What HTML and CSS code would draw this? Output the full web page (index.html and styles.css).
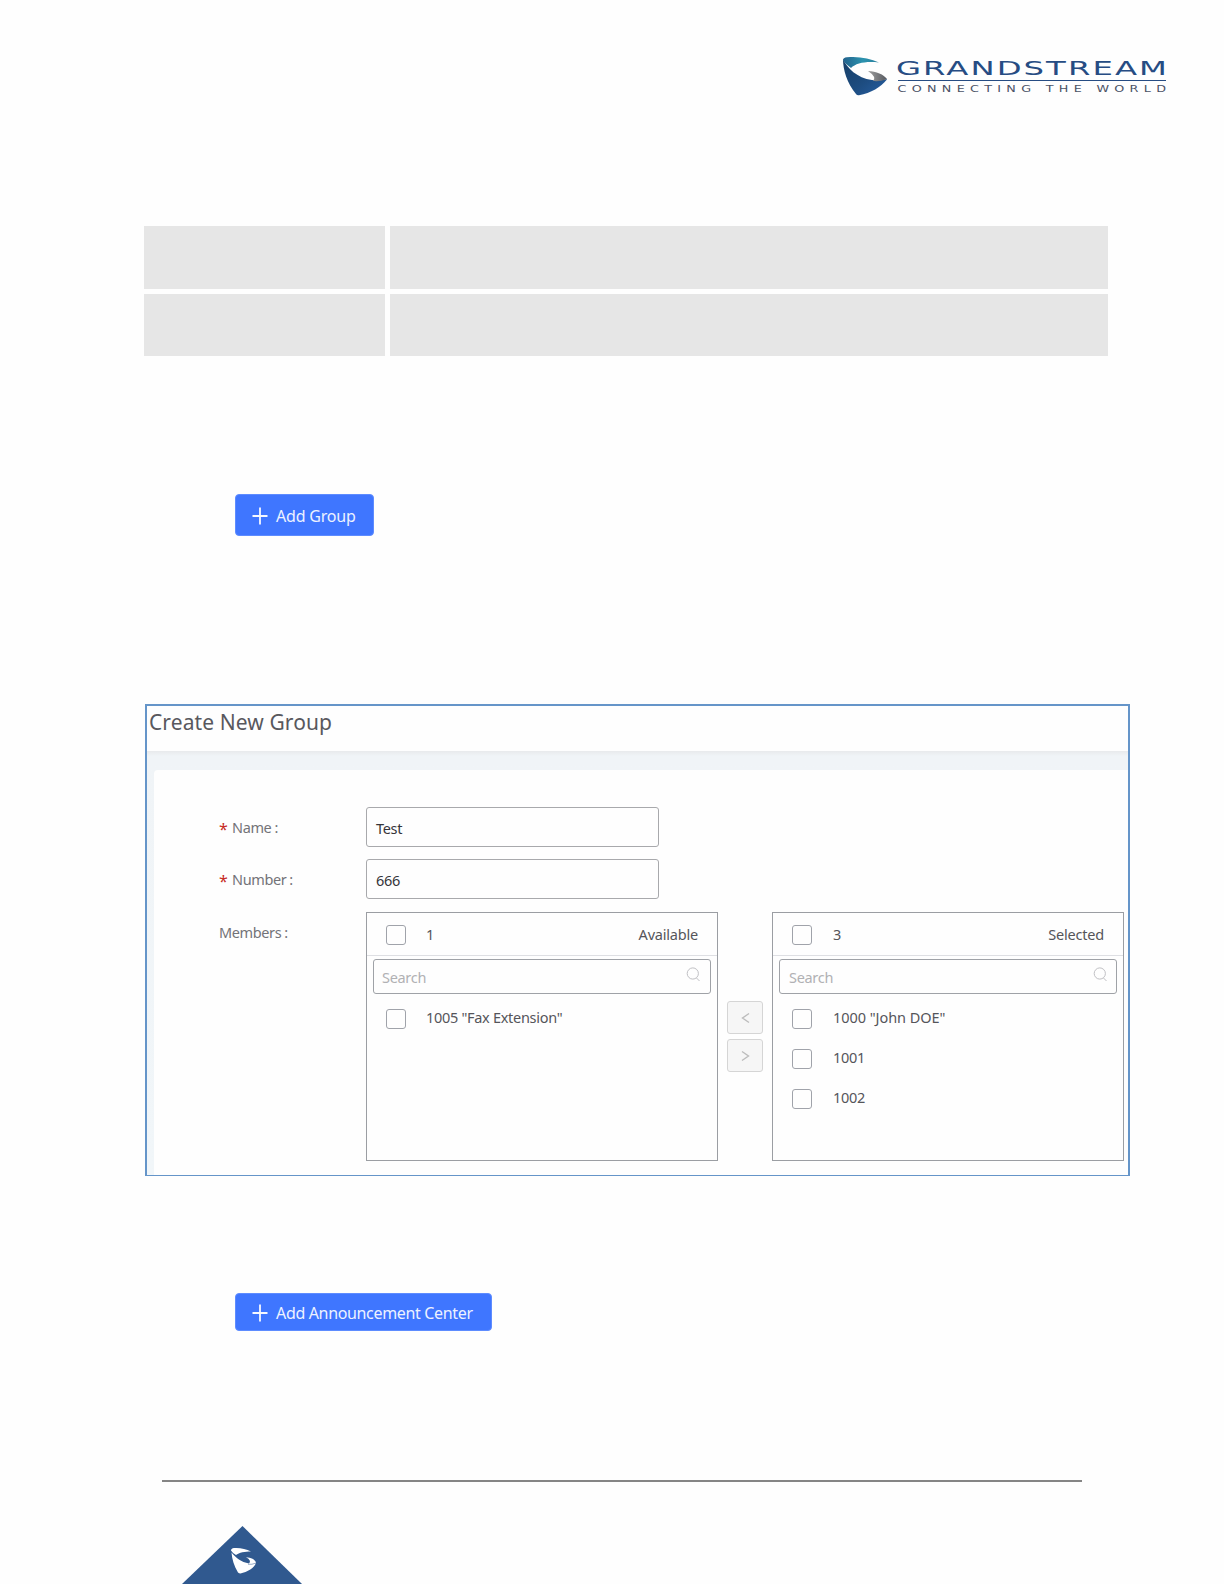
FILE: index.html
```html
<!DOCTYPE html>
<html lang="en">
<head>
<meta charset="utf-8">
<title>Create New Group</title>
<link rel="stylesheet" href="styles.css">
</head>
<body>
<main class="page">
  <header class="brand">
    <svg width="326" height="42" viewBox="842 55 326 42" role="img" aria-label="Grandstream">
      <defs>
        <linearGradient id="teal" x1="0" x2="1"><stop offset="0" stop-color="#23628c"/><stop offset=".55" stop-color="#2b92ae"/><stop offset="1" stop-color="#2a7f9d"/></linearGradient>
        <linearGradient id="navy" x1="0" x2="1" y1="0" y2="1"><stop offset="0" stop-color="#173e66"/><stop offset=".55" stop-color="#1d4c80"/><stop offset="1" stop-color="#285fa2"/></linearGradient>
        <linearGradient id="steel" x1="0" x2="1"><stop offset="0" stop-color="#a0a0a0"/><stop offset="1" stop-color="#55585e"/></linearGradient>
      </defs>
      <path fill="url(#navy)" d="M843 59C847 68 857 78 872 80C878 81 883 80 887 79L886.500 80C881 87 871 93 859 95.200Q857 95.500 856 94C847 83 843 70 843 59Z"/>
      <path fill="url(#teal)" d="M843 60Q843 57.600 847 57.200C859 56 870 58.500 879 62.500C866 61 856 63 851 68C847 65 844 62 843 60Z"/>
      <path fill="url(#steel)" d="M868 71C876 71.500 884 74.500 887 79C884 80.500 879 81.500 873 81Q877 77 868 71Z"/>
      <path fill="#264c83" d="M898 80h268v1.100H898z"/>
      <text class="brand-name" transform="translate(896 75) scale(1.65 1)" textLength="164.200" lengthAdjust="spacing">GRANDSTREAM</text>
      <text class="brand-tag" transform="translate(897.500 92) scale(1.5 1)" textLength="179" lengthAdjust="spacing">CONNECTING THE WORLD</text>
    </svg>
  </header>

  <div class="grid-table"><div></div><div></div><div></div><div></div></div>

  <button class="add add-group"><svg width="16" height="18" viewBox="0 0 16 18"><path d="M.5 9h15M8 .5v17"/></svg><span>Add Group</span></button>

  <section class="frame">
    <h1>Create New Group</h1>
    <div class="backdrop">
      <form class="panel">
        <div class="row"><label><i>*</i>Name<b>:</b></label><div class="field">Test</div></div>
        <div class="row"><label><i>*</i>Number<b>:</b></label><div class="field">666</div></div>
        <div class="row members">
          <label>Members<b>:</b></label>
          <div class="list">
            <div class="head"><span class="box"></span><span>1</span><span class="kind">Available</span></div>
            <div class="search">Search<svg width="15" height="16" viewBox="0 0 15 16"><circle cx="6.800" cy="6.500" r="5.600"/><path d="M10.500 11l3 3"/></svg></div>
            <div class="item"><span class="box"></span><span>1005 "Fax Extension"</span></div>
          </div>
          <div class="moves">
            <div class="move"><svg width="9" height="12" viewBox="0 0 9 12"><path d="M8 1.500L1.500 6L8 10.500"/></svg></div>
            <div class="move"><svg width="9" height="12" viewBox="0 0 9 12"><path d="M1 1.500L7.500 6L1 10.500"/></svg></div>
          </div>
          <div class="list selected">
            <div class="head"><span class="box"></span><span>3</span><span class="kind">Selected</span></div>
            <div class="search">Search<svg width="15" height="16" viewBox="0 0 15 16"><circle cx="6.800" cy="6.500" r="5.600"/><path d="M10.500 11l3 3"/></svg></div>
            <div class="item"><span class="box"></span><span>1000 "John DOE"</span></div>
            <div class="item"><span class="box"></span><span>1001</span></div>
            <div class="item"><span class="box"></span><span>1002</span></div>
          </div>
        </div>
      </form>
    </div>
  </section>

  <button class="add add-center"><svg width="16" height="18" viewBox="0 0 16 18"><path d="M.5 9h15M8 .5v17"/></svg><span>Add Announcement Center</span></button>

  <footer>
    <hr>
    <svg class="corner" width="120" height="58" viewBox="182 1526 120 58">
      <path fill="#30598f" d="M242.500 1526L302 1584H182z"/>
      <path fill="#fff" d="M231 1550.500Q231 1548.500 234 1548C240 1547.500 246 1549 251 1551.500C245 1551.500 239 1552.500 236 1555Q232 1552.500 231 1550.500Z"/>
      <path fill="#fff" d="M231.500 1552.500C236 1558 241 1562 249 1563.500Q252 1560.500 246 1557.300C251 1557.500 255 1559.500 256 1562.500C255 1568 247 1572 240.500 1573.500Q239 1573.500 238 1572.500C234 1566 232 1559 231.500 1552.500Z"/>
      <path fill="none" stroke="#30598f" stroke-width=".5" d="M248 1564.300Q252 1564.800 256 1563"/>
    </svg>
  </footer>
</main>
</body>
</html>
```
FILE: styles.css
```css
* { box-sizing: border-box; }
body { margin: 0; background: #fefefe; font-family: "Noto Sans", "Open Sans", sans-serif; }
svg { display: block; }
.page { width: 1224px; height: 1584px; overflow: hidden; display: flex; flex-direction: column; align-items: flex-start; }

.brand { padding: 55px 0 0 842px; height: 226px; }
.brand-name { font: 19.600px "DejaVu Sans", sans-serif; fill: #264c83; }
.brand-tag { font: 8.500px "DejaVu Sans", sans-serif; fill: #4b5266; }

.grid-table { display: grid; grid-template: 63px 62px / 241px 718px; gap: 5px; margin-left: 144px; }
.grid-table div { background: #e6e6e6; }

.add { display: flex; align-items: center; gap: 8px; margin-left: 235px; padding: 1px 0 0 16px; border: 1px solid #5e8cff; border-radius: 4px; background: #3f76ff; color: #edf2ff; font: 16px "Noto Sans", sans-serif; white-space: nowrap; }
.add svg { fill: none; stroke: #f6f8ff; stroke-width: 1.800; }
.add-group { width: 139px; height: 42px; margin-top: 138px; letter-spacing: -.2px; }
.add-center { width: 257px; height: 38px; margin-top: 117px; letter-spacing: -.34px; }

.frame { width: 985px; height: 472px; margin: 168px 0 0 145px; border: 2px solid #6595c9; border-bottom-width: 1px; display: flex; flex-direction: column; }
h1 { margin: 0; height: 45px; padding-left: 2px; font-size: 21px; font-weight: 400; line-height: 33px; letter-spacing: .1px; color: #58585d; white-space: nowrap; }
.backdrop { flex: 1; padding: 19px 0 0 7px; background: linear-gradient(#e8eaec, #f0f4f7 5px, #f1f6f9); }
.panel { height: 100%; padding: 37px 0 0 65px; border-top-left-radius: 4px; background: #fefefe; font-size: 14.500px; letter-spacing: -.3px; color: #55555a; }
.row { display: flex; margin-bottom: 12px; }
label { width: 147px; height: 40px; display: flex; align-items: center; color: #737378; letter-spacing: -.38px; }
label i { width: 13px; font-style: normal; font-size: 16px; line-height: 20px; padding-top: 4px; color: #c72b25; }
label b { font-weight: 400; margin-left: 3px; }
.field { width: 293px; height: 40px; padding-left: 9px; border: 1px solid #a8a9ac; border-radius: 3px; line-height: 40px; color: #35353a; }
.members { margin-top: 13px; }
.list { width: 352px; height: 249px; border: 1px solid #9b9ea3; }
.head { height: 43px; padding: 2px 19px 0; border-bottom: 1px solid #dedfe3; display: flex; align-items: center; }
.head span:nth-child(2), .item span:nth-child(2) { position: relative; top: -1.500px; }
.kind { margin-left: auto; position: relative; top: -1.500px; letter-spacing: -.2px; }
.box { width: 20px; height: 20px; margin-right: 20px; border: 1px solid #a0a3aa; border-radius: 3px; }
.search { height: 35px; margin: 3px 6px 5px; padding: 0 9px 0 8px; border: 1px solid #9fa2a7; border-radius: 3px; display: flex; align-items: center; justify-content: space-between; color: #b1b1b4; }
.search svg { fill: none; stroke: #c0c0c4; stroke-width: 1; margin-bottom: 3px; }
.item { height: 40px; padding: 0 19px; display: flex; align-items: center; }
.item span:nth-child(2) { top: -2px; }
.selected .box { margin-right: 21px; }
.selected .search { padding-right: 8px; padding-left: 9px; }
.selected .item:nth-child(3) { letter-spacing: -.05px; }
.moves { width: 54px; padding: 89px 0 0 9px; display: grid; align-content: start; gap: 5px; }
.move { width: 36px; height: 33px; display: grid; place-items: center; border: 1px solid #d5d5d5; border-radius: 3px; background: #f6f6f6; }
.move svg { fill: none; stroke: #bcbcbc; stroke-width: 1.400; }

footer { flex: 1; display: flex; flex-direction: column; justify-content: space-between; }
hr { width: 920px; height: 2px; margin: 149px 0 0 162px; border: 0; background: #858585; }
.corner { margin-left: 182px; }
```
